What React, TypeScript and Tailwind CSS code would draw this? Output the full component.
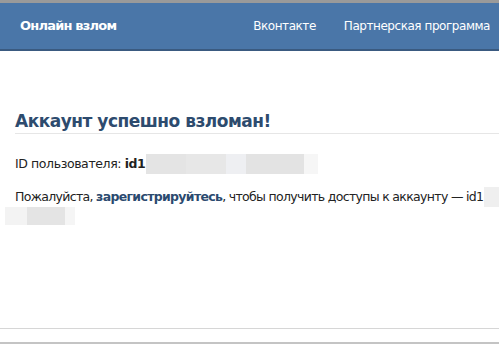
export default function App() {
  const font = { fontFamily: '"DejaVu Sans", "Noto Sans", sans-serif' };
  return (
    <div className="w-[499px] h-[344px] bg-white overflow-hidden relative" style={font}>
      <div className="h-[3px] bg-[#9a9a9a]" />
      <div className="h-[48px] bg-[#4a76a8] border-b-[2px] border-[#3a5a80] flex items-center pl-[20px] pr-[9px]">
        <span className="text-white font-bold text-[13px] tracking-[-0.8px]">Онлайн взлом</span>
        <div className="ml-auto flex gap-[28px] text-white text-[12px] tracking-[-0.45px]">
          <span>Вконтакте</span>
          <span>Партнерская программа</span>
        </div>
      </div>
      <div className="pl-[15px] pt-[59px]">
        <div className="border-b border-[#e6e6e6] pb-[1px]">
          <h1 className="text-[17px] font-bold text-[#2d4b6e] tracking-[-0.5px] leading-[22px]">Аккаунт успешно взломан!</h1>
        </div>
        <div className="mt-[20px] flex items-center text-[12.5px] text-[#222] h-[20px] tracking-[-0.4px]">
          <span>ID пользователя:&nbsp;</span>
          <span className="font-bold">id1</span>
          <div className="ml-[1px] flex h-[20px]">
            <div className="w-[40px] bg-[#e4e4e4]" />
            <div className="w-[40px] bg-[#e7e7e7]" />
            <div className="w-[20px] bg-[#eeeff2]" />
            <div className="w-[58px] bg-[#e3e3e3]" />
            <div className="w-[14px] bg-[#f6f6f6]" />
          </div>
        </div>
        <div className="mt-[13px] flex items-center text-[12.5px] text-[#222] whitespace-nowrap h-[20px] tracking-[-0.68px]">
          <span>Пожалуйста,&nbsp;</span>
          <span className="font-bold text-[#2b4a6f]">зарегистрируйтесь</span>
          <span>, чтобы получить доступы к аккаунту — id1</span>
          <div className="w-[16px] h-[20px] bg-[#efefef] ml-[1px]" />
        </div>
      </div>
      <div className="flex h-[18px] ml-[5px]">
        <div className="w-[22px] bg-[#f3f3f3]" />
        <div className="w-[38px] bg-[#e4e4e4]" />
        <div className="w-[10px] bg-[#f5f5f5]" />
      </div>
      <div className="absolute left-0 right-0 top-[328px] h-[1px] bg-[#d6d6d6]" />
      <div className="absolute left-0 right-0 top-[342px] h-[2px] bg-[#c4c4c4]" />
    </div>
  );
}
